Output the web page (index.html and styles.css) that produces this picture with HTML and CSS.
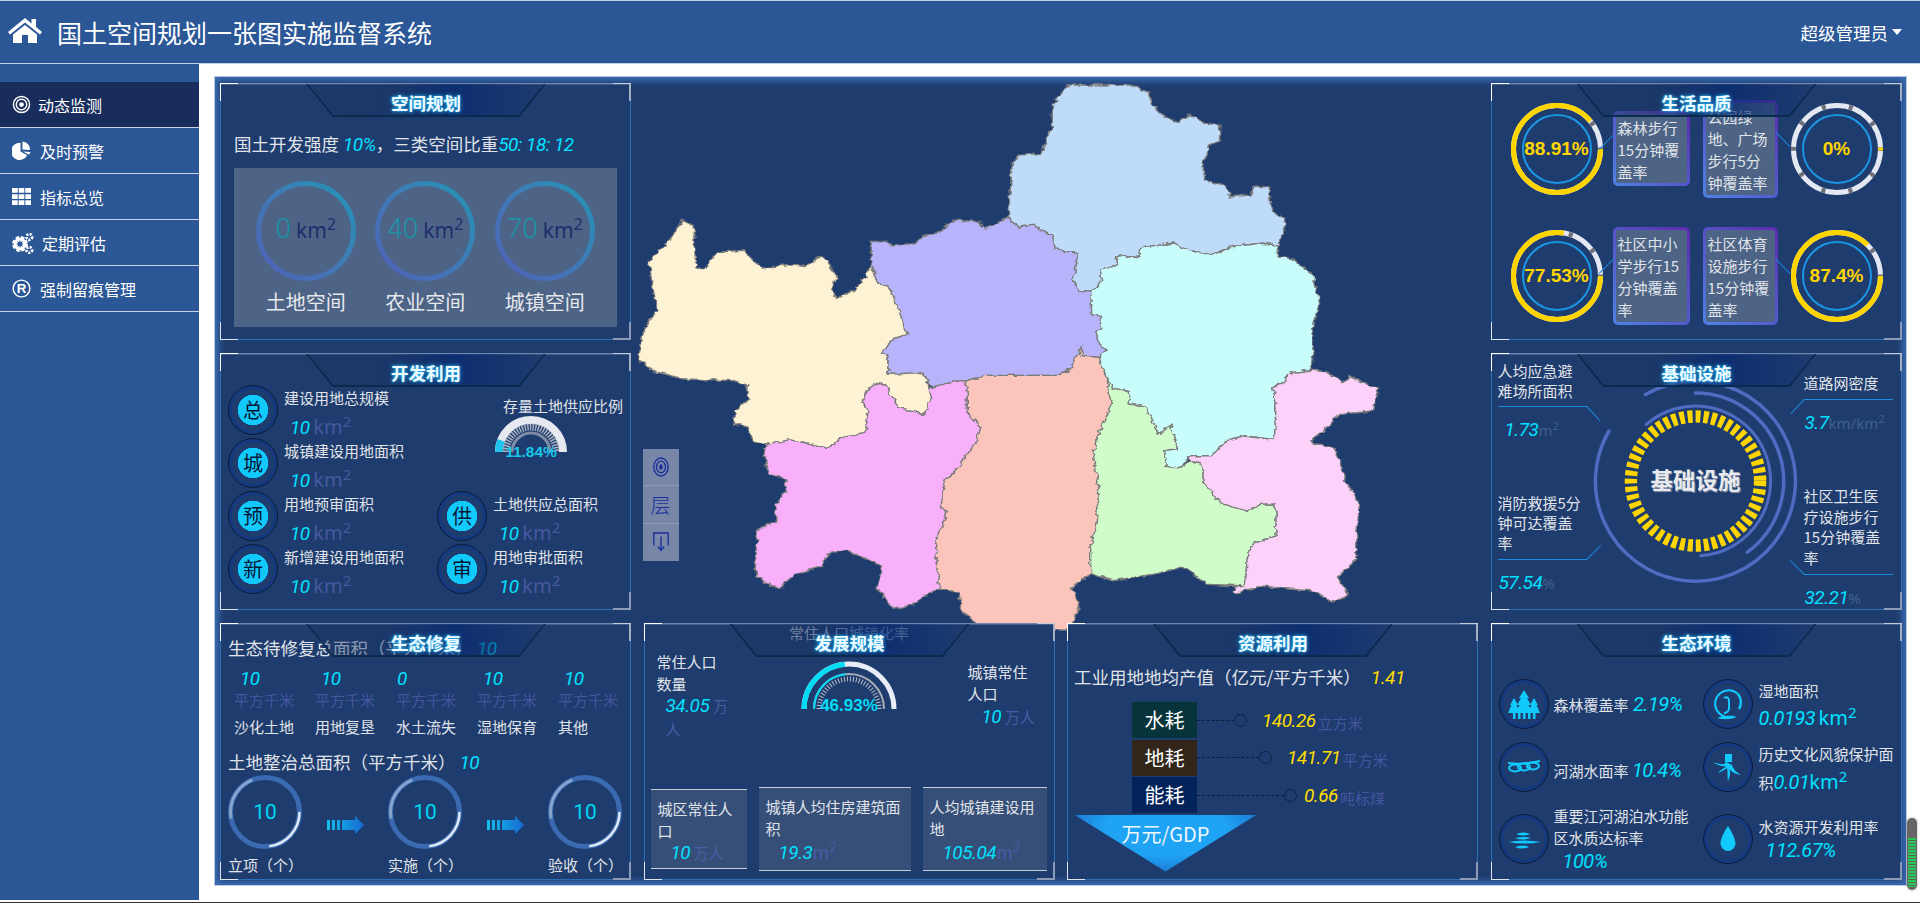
FILE: index.html
```html
<!DOCTYPE html>
<html lang="zh-CN">
<head>
<meta charset="utf-8">
<title>国土空间规划一张图实施监督系统</title>
<link rel="stylesheet" href="styles.css">
</head>
<body>
<header class="header">
  <svg class="home" viewBox="0 0 34 26"><path d="M17 1 0 15l2 2.500L17 5.500l15 12 2-2.500-6-5V2h-4.500v4.500z"/><path d="M5 17.500 17 8l12 9.500V26H20v-8h-6v8H5z"/></svg>
  <h1 class="app-title">国土空间规划一张图实施监督系统</h1>
  <div class="user">超级管理员<i class="caret"></i></div>
</header>
<div class="layout">
  <nav class="sidebar">
    <a class="nav active"><svg viewBox="0 0 20 20"><circle cx="10" cy="10" r="8.500" class="ol"/><circle cx="10" cy="10" r="5.500" class="ol"/><circle cx="10" cy="10" r="2.500"/></svg><span>动态监测</span></a>
    <a class="nav"><svg viewBox="0 0 20 20"><path d="M9 2v9l7 4A9 9 0 1 1 9 2z"/><path d="M11 .5a8.500 8.500 0 0 1 8 9l-8-.5zM11.500 11l8 .5-1.500 3z"/></svg><span>及时预警</span></a>
    <a class="nav"><svg viewBox="0 0 20 20"><path d="M0 1h6v5H0zM7 1h6v5H7zM14 1h6v5h-6zM0 7.500h6v5H0zM7 7.500h6v5H7zM14 7.500h6v5h-6zM0 14h6v5H0zM7 14h6v5H7zM14 14h6v5h-6z"/></svg><span>指标总览</span></a>
    <a class="nav nav-wide"><svg viewBox="0 0 22 22"><circle cx="8" cy="12" r="5.200" class="gear"/><circle cx="8" cy="12" r="5" class="gear-in"/><circle cx="17.300" cy="5" r="2.800" class="gear-sm"/><circle cx="17.300" cy="18" r="2.800" class="gear-sm"/></svg><span>定期评估</span></a>
    <a class="nav"><svg viewBox="0 0 20 20"><circle cx="10" cy="10" r="8.800" class="ol"/><text x="10" y="15" text-anchor="middle" class="r">R</text></svg><span>强制留痕管理</span></a>
  </nav>
  <main class="workspace">
    <div class="screen">

      <section class="panel space">
        <h2 class="title"><span>空间规划</span></h2>
        <p class="lead">国土开发强度 <b class="num">10%</b>，三类空间比重<b class="num">50: 18: 12</b></p>
        <div class="space-box">
          <div class="space-col"><div class="ring-o"><span class="big">0</span><span class="km">km<sup>2</sup></span></div><div class="space-name">土地空间</div></div>
          <div class="space-col"><div class="ring-o"><span class="big">40</span><span class="km">km<sup>2</sup></span></div><div class="space-name">农业空间</div></div>
          <div class="space-col"><div class="ring-o"><span class="big">70</span><span class="km">km<sup>2</sup></span></div><div class="space-name">城镇空间</div></div>
        </div>
      </section>

      <div class="map-cell">
        <svg class="map" viewBox="0 0 1568 1568" preserveAspectRatio="none">
          <defs><filter id="rough" x="-5%" y="-5%" width="110%" height="110%"><feTurbulence type="fractalNoise" baseFrequency="0.07" numOctaves="2" seed="4"/><feDisplacementMap in="SourceGraphic" scale="13" xChannelSelector="R" yChannelSelector="G"/></filter></defs>
          <g filter="url(#rough)" class="regions">
          <polygon fill="#bfdbfa" points="798,42 912,42 945,62 950,95 965,120 1000,148 1020,125 1040,145 1075,155 1075,200 1055,210 1050,240 1042,265 1050,310 1085,322 1095,355 1130,350 1140,325 1165,328 1172,395 1195,420 1195,445 1182,490 1150,485 1100,495 1060,518 1020,505 990,485 935,495 925,525 885,520 890,545 858,560 860,590 840,622 820,620 808,585 818,515 775,500 770,465 735,435 705,440 690,410 697,260 715,235 750,235 770,160 770,100"/>
          <polygon fill="#b8b4fb" points="690,410 705,440 735,435 770,465 775,500 818,515 808,585 820,620 840,622 842,685 858,690 858,725 848,735 855,765 870,785 855,805 822,800 825,770 800,840 780,855 650,855 615,870 600,870 550,890 540,860 525,848 470,852 470,800 460,795 475,760 503,740 490,670 470,605 450,597 440,545 440,480 470,480 475,492 510,490 545,460 565,455 590,420 640,425 645,445 670,430"/>
          <polygon fill="#fdf2d3" points="95,420 115,435 120,550 135,560 160,510 205,505 240,555 285,545 320,550 350,520 380,580 365,610 378,640 415,610 440,550 450,597 470,605 490,670 503,740 475,760 460,795 470,800 470,852 525,848 540,860 550,920 535,965 490,945 465,880 450,875 430,900 425,930 435,965 428,1015 390,1025 360,1060 325,1045 290,1035 245,1050 225,1040 215,1000 190,990 190,955 215,925 215,885 190,870 100,865 60,850 40,840 15,810 25,730 50,670 40,600 35,535 70,480"/>
          <polygon fill="#f8b0fb" points="430,900 450,875 465,880 490,945 535,965 550,920 545,890 600,870 615,870 615,960 640,1000 632,1040 600,1110 575,1150 565,1220 578,1240 560,1310 558,1375 565,1450 540,1470 510,1500 480,1510 450,1450 460,1390 425,1365 395,1345 360,1355 350,1390 300,1410 275,1450 250,1440 228,1410 232,1290 268,1260 265,1220 285,1180 282,1145 250,1130 245,1050 290,1035 325,1045 360,1060 390,1025 428,1015 435,965 425,930"/>
          <polygon fill="#fcc5bc" points="615,870 650,855 780,855 800,840 825,770 822,800 855,805 870,865 878,940 850,1030 845,1080 855,1170 850,1270 840,1340 840,1410 805,1450 820,1500 800,1568 640,1568 605,1510 600,1465 565,1450 558,1375 560,1310 578,1240 565,1220 575,1150 600,1110 632,1040 640,1000 615,960"/>
          <polygon fill="#c8fdfc" points="840,622 860,590 858,560 890,545 885,520 925,525 935,495 990,485 1020,505 1060,518 1100,495 1150,485 1182,490 1182,520 1210,530 1245,575 1258,650 1245,710 1245,800 1240,840 1200,850 1195,870 1172,890 1178,930 1175,1035 1120,1025 1090,1035 1060,1080 1020,1080 1005,1115 975,1110 975,1065 998,1060 985,995 965,1020 940,945 910,935 910,900 880,890 870,865 855,805 870,785 855,765 848,735 858,725 858,690 842,685"/>
          <polygon fill="#d0fcc9" points="870,865 880,890 910,900 910,935 940,945 965,1020 985,995 998,1060 975,1065 975,1110 1005,1115 1020,1095 1045,1105 1045,1155 1080,1215 1125,1235 1150,1215 1178,1215 1178,1305 1135,1325 1125,1370 1122,1445 1050,1440 1010,1390 960,1410 880,1430 840,1410 840,1340 850,1270 855,1170 845,1080 850,1030 878,940"/>
          <polygon fill="#fcd2fa" points="1240,840 1270,845 1300,875 1310,855 1365,895 1355,955 1290,965 1265,1010 1240,1040 1285,1060 1295,1100 1305,1150 1330,1215 1325,1300 1325,1370 1290,1420 1310,1470 1280,1490 1250,1460 1150,1445 1105,1465 1100,1445 1122,1445 1125,1370 1135,1325 1178,1305 1178,1215 1150,1215 1125,1235 1080,1215 1045,1155 1045,1105 1020,1095 1020,1080 1060,1080 1090,1035 1120,1025 1175,1035 1178,930 1172,890 1195,870 1200,850"/>
          </g>
        </svg>
        <div class="map-tools">
          <div class="tool"><svg viewBox="0 0 20 26" class="tool-ic"><ellipse cx="10" cy="13" rx="8" ry="10"/><ellipse cx="10" cy="13" rx="5" ry="6.500"/><ellipse cx="10" cy="13" rx="2" ry="3" class="dot"/></svg></div>
          <div class="tool">层</div>
          <div class="tool"><svg viewBox="0 0 20 26" class="tool-ic"><path d="M2 17V3h16v14"/><path d="M10 7v15M6.500 18l3.500 4 3.500-4"/></svg></div>
        </div>
      </div>

      <section class="panel quality">
        <h2 class="title"><span>生活品质</span></h2>
        <div class="quality-grid">
          <div class="q-ring"><svg viewBox="0 0 92 92"><circle cx="46" cy="46" r="43.500" class="q-base"/><circle cx="46" cy="46" r="43.500" class="q-tick"/><circle cx="46" cy="46" r="43.500" class="q-val" pathLength="100" stroke-dasharray="88.91 100"/><circle cx="46" cy="46" r="34" class="q-in"/></svg><span>88.91%</span></div>
          <div class="q-box q-short link-l">森林步行<br>15分钟覆<br>盖率</div>
          <div class="q-box q-tall link-r">公园绿<br>地、广场<br>步行5分<br>钟覆盖率</div>
          <div class="q-ring"><svg viewBox="0 0 92 92"><circle cx="46" cy="46" r="43.500" class="q-base"/><circle cx="46" cy="46" r="43.500" class="q-tick"/><circle cx="46" cy="46" r="43.500" class="q-val" pathLength="100" stroke-dasharray="1 99" stroke-dashoffset="0.500"/><circle cx="46" cy="46" r="34" class="q-in"/></svg><span>0%</span></div>
          <div class="q-ring"><svg viewBox="0 0 92 92"><circle cx="46" cy="46" r="43.500" class="q-base"/><circle cx="46" cy="46" r="43.500" class="q-tick"/><circle cx="46" cy="46" r="43.500" class="q-val" pathLength="100" stroke-dasharray="77.53 100"/><circle cx="46" cy="46" r="34" class="q-in"/></svg><span>77.53%</span></div>
          <div class="q-box q-full link-l">社区中小<br>学步行15<br>分钟覆盖<br>率</div>
          <div class="q-box q-full link-r">社区体育<br>设施步行<br>15分钟覆<br>盖率</div>
          <div class="q-ring"><svg viewBox="0 0 92 92"><circle cx="46" cy="46" r="43.500" class="q-base"/><circle cx="46" cy="46" r="43.500" class="q-tick"/><circle cx="46" cy="46" r="43.500" class="q-val" pathLength="100" stroke-dasharray="87.4 100"/><circle cx="46" cy="46" r="34" class="q-in"/></svg><span>87.4%</span></div>
        </div>
      </section>

      <section class="panel develop">
        <h2 class="title"><span>开发利用</span></h2>
        <div class="dev-grid">
          <div class="dev-item"><div class="badge solid">总</div><div><div class="dev-name">建设用地总规模</div><div class="dev-val"><b class="num">10</b> <span class="km-u">km<sup>2</sup></span></div></div></div>
          <div class="dev-gauge">
            <div class="dev-gauge-label">存量土地供应比例</div>
            <svg viewBox="0 0 80 40" class="gauge-a">
              <path d="M8 38a32 32 0 0 1 64 0" class="ga-band"/>
              <path d="M8 38a32 32 0 0 1 64 0" class="ga-cyan" pathLength="100" stroke-dasharray="11.84 100"/>
              <path d="M15 38a25 25 0 0 1 50 0" class="ga-tick"/>
              <path d="M21 38a19 19 0 0 1 38 0" class="ga-inner"/>
              <text x="40" y="43" text-anchor="middle" class="ga-text">11.84%</text>
            </svg>
          </div>
          <div class="dev-item"><div class="badge solid">城</div><div><div class="dev-name">城镇建设用地面积</div><div class="dev-val"><b class="num">10</b> <span class="km-u">km<sup>2</sup></span></div></div></div>
          <div class="dev-item"><div class="badge solid">预</div><div><div class="dev-name">用地预审面积</div><div class="dev-val"><b class="num">10</b> <span class="km-u">km<sup>2</sup></span></div></div></div>
          <div class="dev-item"><div class="badge solid">供</div><div><div class="dev-name">土地供应总面积</div><div class="dev-val"><b class="num">10</b> <span class="km-u">km<sup>2</sup></span></div></div></div>
          <div class="dev-item"><div class="badge solid">新</div><div><div class="dev-name">新增建设用地面积</div><div class="dev-val"><b class="num">10</b> <span class="km-u">km<sup>2</sup></span></div></div></div>
          <div class="dev-item"><div class="badge solid">审</div><div><div class="dev-name">用地审批面积</div><div class="dev-val"><b class="num">10</b> <span class="km-u">km<sup>2</sup></span></div></div></div>
        </div>
      </section>

      <section class="panel infra">
        <h2 class="title"><span>基础设施</span></h2>
        <div class="infra-col left">
          <div class="infra-block b1"><div class="cap diag-ur">人均应急避难场所面积</div><div class="infra-val"><b class="num">1.73</b><span class="u2">m<sup>2</sup></span></div></div>
          <div class="infra-block b2"><div class="cap diag-dr">消防救援5分钟可达覆盖率</div><div class="infra-val flush"><b class="num">57.54</b><span class="u2">%</span></div></div>
        </div>
        <svg class="infra-rings" viewBox="0 0 217 257">
          <path d="M58.500 41.500A100 100 0 1 1 21.900 78" class="arc"/>
          <path d="M108.500 40A88 88 0 0 1 160.200 199.300" class="arc"/>
          <path d="M59.200 71.500A75 75 0 1 1 113.500 202.800" class="arc thin"/>
          <circle cx="108.500" cy="128" r="64.600" class="ticks"/>
          <text x="108.500" y="136" text-anchor="middle" class="infra-label">基础设施</text>
        </svg>
        <div class="infra-col right">
          <div class="infra-block b3"><div class="cap diag-ul">道路网密度</div><div class="infra-val flush"><b class="num">3.7</b><span class="u2">km/km<sup>2</sup></span></div></div>
          <div class="infra-block b4"><div class="cap diag-dl">社区卫生医疗设施步行15分钟覆盖率</div><div class="infra-val flush"><b class="num">32.21</b><span class="u2">%</span></div></div>
        </div>
      </section>

      <section class="panel eco">
        <h2 class="title"><span>生态修复</span></h2>
        <p class="lead eco-lead">生态待修复总面积（平方千米）<b class="num eco-total">10</b></p>
        <div class="eco-cols">
          <div><div class="eco-num"><b class="num">10</b></div><div class="unit">平方千米</div><div class="eco-name">沙化土地</div></div>
          <div><div class="eco-num"><b class="num">10</b></div><div class="unit">平方千米</div><div class="eco-name">用地复垦</div></div>
          <div><div class="eco-num flush"><b class="num">0</b></div><div class="unit">平方千米</div><div class="eco-name">水土流失</div></div>
          <div><div class="eco-num"><b class="num">10</b></div><div class="unit">平方千米</div><div class="eco-name">湿地保育</div></div>
          <div><div class="eco-num"><b class="num">10</b></div><div class="unit">平方千米</div><div class="eco-name">其他</div></div>
        </div>
        <p class="lead eco-lead2">土地整治总面积（平方千米）<b class="num eco-total2">10</b></p>
        <div class="stages">
          <div class="stage"><svg viewBox="0 0 74 74" class="stage-ring"><circle cx="37" cy="37" r="34.500" class="sr-glow"/><circle cx="37" cy="37" r="34.500" class="sr-white" pathLength="100" stroke-dasharray="23 77"/><circle cx="37" cy="37" r="34.500" class="sr-white2" pathLength="100" stroke-dasharray="22 78" stroke-dashoffset="-47"/><text x="37" y="44" text-anchor="middle">10</text></svg><div class="stage-name">立项（个）</div></div>
          <svg class="flow-arrow" viewBox="0 0 37 18"><defs><linearGradient id="fa"><stop offset="0" stop-color="#14c0ee"/><stop offset="1" stop-color="#1468d0"/></linearGradient></defs><path fill="url(#fa)" d="M0 4h3v10H0zM5 4h3v10H5zM10 4h3v10h-3zM15 4h13V0l9 9-9 9v-4H15z"/></svg>
          <div class="stage"><svg viewBox="0 0 74 74" class="stage-ring"><circle cx="37" cy="37" r="34.500" class="sr-glow"/><circle cx="37" cy="37" r="34.500" class="sr-white" pathLength="100" stroke-dasharray="23 77"/><circle cx="37" cy="37" r="34.500" class="sr-white2" pathLength="100" stroke-dasharray="22 78" stroke-dashoffset="-47"/><text x="37" y="44" text-anchor="middle">10</text></svg><div class="stage-name">实施（个）</div></div>
          <svg class="flow-arrow" viewBox="0 0 37 18"><path fill="url(#fa)" d="M0 4h3v10H0zM5 4h3v10H5zM10 4h3v10h-3zM15 4h13V0l9 9-9 9v-4H15z"/></svg>
          <div class="stage"><svg viewBox="0 0 74 74" class="stage-ring"><circle cx="37" cy="37" r="34.500" class="sr-glow"/><circle cx="37" cy="37" r="34.500" class="sr-white" pathLength="100" stroke-dasharray="23 77"/><circle cx="37" cy="37" r="34.500" class="sr-white2" pathLength="100" stroke-dasharray="22 78" stroke-dashoffset="-47"/><text x="37" y="44" text-anchor="middle">10</text></svg><div class="stage-name">验收（个）</div></div>
        </div>
      </section>

      <section class="panel scale">
        <h2 class="title"><span>发展规模</span></h2>
        <div class="ghost">常住人口城镇化率</div>
        <div class="pop-top">
          <div class="pop-left"><div class="pop-name">常住人口数量</div><div class="pop-val"><b class="num">34.05</b> <span class="unit-i">万人</span></div></div>
          <svg class="gauge-b" viewBox="0 0 100 52">
            <path d="M5 49a45 45 0 0 1 90 0" class="gb-white"/>
            <path d="M5 49a45 45 0 0 1 90 0" class="gb-cyan" pathLength="100" stroke-dasharray="46.93 100"/>
            <path d="M15 49a35 35 0 0 1 70 0" class="gb-line"/>
            <path d="M15 49a35 35 0 0 1 70 0" class="gb-linec" pathLength="100" stroke-dasharray="46.93 100"/>
            <path d="M20 49a30 30 0 0 1 60 0" class="gb-tick"/>
            <text x="50" y="51" text-anchor="middle" class="gb-text">46.93%</text>
          </svg>
          <div class="pop-right"><div class="pop-name">城镇常住人口</div><div class="pop-val2"><b class="num">10</b> <span class="unit-i">万人</span></div></div>
        </div>
        <div class="cards">
          <div class="card c1"><div>城区常住人口</div><div class="card-val"><b class="num">10</b> <span class="unit-i">万人</span></div></div>
          <div class="card c2"><div>城镇人均住房建筑面积</div><div class="card-val"><b class="num">19.3</b><span class="unit-i unit-m">m<sup>2</sup></span></div></div>
          <div class="card c3"><div>人均城镇建设用地</div><div class="card-val"><b class="num">105.04</b><span class="unit-i unit-m">m<sup>2</sup></span></div></div>
        </div>
      </section>

      <section class="panel resource">
        <h2 class="title"><span>资源利用</span></h2>
        <p class="lead res-lead">工业用地地均产值（亿元/平方千米）<b class="num yellow res-total">1.41</b></p>
        <div class="res-rows">
          <div class="res-row r1"><div class="res-tag t1">水耗</div><i class="leader"></i><i class="node"></i><b class="num yellow">140.26</b><span class="unit-r">立方米</span></div>
          <div class="res-row r2"><div class="res-tag t2">地耗</div><i class="leader"></i><i class="node"></i><b class="num yellow">141.71</b><span class="unit-r">平方米</span></div>
          <div class="res-row r3"><div class="res-tag t3">能耗</div><i class="leader"></i><i class="node"></i><b class="num yellow">0.66</b><span class="unit-r">吨标煤</span></div>
        </div>
        <div class="funnel">万元/GDP</div>
      </section>

      <section class="panel env">
        <h2 class="title"><span>生态环境</span></h2>
        <div class="env-grid">
          <div class="env-item"><div class="badge"><svg viewBox="0 0 34 34" class="eco-ic"><path d="M17 3l5 8h-2l4 7h-2.500l4.500 8H8l4.500-8H10l4-7h-2zM7 11l4 7H9.500l3.500 8H1l3.500-8H3zM27 11l4 7h-1.500l3.500 8H21l3.500-8H23z"/><path d="M6 26h2.500v6H6zM11 26h2.500v6H11zM16 26h2.500v6H16zM21 26h2.500v6H21zM26 26h2.500v6H26z"/></svg></div><div class="env-text">森林覆盖率<b class="num"> 2.19%</b></div></div>
          <div class="env-item"><div class="badge"><svg viewBox="0 0 34 34" class="eco-ic"><path d="M27 7A13.500 13.500 0 1 0 22 29.500" class="ic-s"/><path d="M27 7a13.500 13.500 0 0 1 1 15" class="ic-s2"/><path d="M13 11c3-2 5 0 5 3v8c-1 3-3 4-5 4" class="ic-s3"/><path d="M6 31q10-4 20-1-10 4-20 1z"/></svg></div><div class="env-text tall">湿地面积<br><b class="num">0.0193</b> <span class="km-c">km<sup>2</sup></span></div></div>
          <div class="env-item"><div class="badge"><svg viewBox="0 0 34 34" class="eco-ic"><ellipse cx="8" cy="18" rx="6" ry="3.500" class="ic-s3"/><ellipse cx="17" cy="17" rx="6" ry="3.500" class="ic-s3"/><ellipse cx="26" cy="16" rx="6" ry="3.500" class="ic-s3"/><path d="M1 13q16 2 32-2" class="ic-s3"/></svg></div><div class="env-text low">河湖水面率 <b class="num">10.4%</b></div></div>
          <div class="env-item"><div class="badge"><svg viewBox="0 0 34 34" class="eco-ic"><path d="M14 4h7v8h-7z"/><path d="M15 12C13 16 8 14 1 12c6 3 10 5 14 4-2 3-5 3-8 7 4-2 7-3 9-5 1 4 0 8 1 13 2-5 3-8 1-12 3 3 6 5 12 6-5-3-8-6-9-10z"/></svg></div><div class="env-text tall2">历史文化风貌保护面积<b class="num">0.01</b><span class="km-c">km<sup>2</sup></span></div></div>
          <div class="env-item"><div class="badge"><svg viewBox="0 0 34 34" class="eco-ic"><path d="M9 12q8-3 14 0-6 3-14 0zM8 16q10-2 16 0-8 3-16 0zM1 20q16-3 33 0-16 3-33 0zM8 25q8-3 14 0-7 3-14 0z"/></svg></div><div class="env-text para">重要江河湖泊水功能区水质达标率<div class="in20"><b class="num">100%</b></div></div></div>
          <div class="env-item"><div class="badge"><svg viewBox="0 0 34 34" class="eco-ic"><path d="M17 4C17 4 9.500 15 9.500 21.500a7.500 7.500 0 0 0 15 0C24.500 15 17 4 17 4z"/></svg></div><div class="env-text para">水资源开发利用率<div class="in7"><b class="num">112.67%</b></div></div></div>
        </div>
      </section>

    </div>
  </main>
</div>
<div class="page-end"></div>
<div class="scroll-widget"></div>
</body>
</html>
```
FILE: styles.css
```css
*{box-sizing:border-box}
html,body{margin:0;padding:0;height:903px;overflow:hidden;background:#fff}
body{font-family:"Noto Sans CJK SC","Liberation Sans",sans-serif;display:flex;flex-direction:column;position:relative;color:#e0e4ea}
h1,h2,p{margin:0;font-weight:normal}
sup{font-size:.75em;line-height:0;vertical-align:.5em}

.header{height:64px;flex:none;display:flex;align-items:center;background:#2b5797;border-top:1px solid #c5d0e2;border-bottom:1px solid #c5d0e2;padding:0 18px 0 8px;color:#fff}
.home{width:34px;height:26px;fill:#fff;margin:-4px 15px 0 0}
.app-title{font-size:25px;line-height:30px;flex:1;white-space:nowrap}
.user{font-size:17.500px;display:flex;align-items:center}
.caret{margin-left:4px;border:5.500px solid transparent;border-top:6px solid #fff;border-bottom:0}

.layout{flex:1;display:flex;min-height:0}
.sidebar{width:199px;height:836px;flex:none;background:#2b5797;padding-top:18px}
.nav{height:46px;display:flex;align-items:center;padding-left:12px;gap:7px;border-bottom:1px solid #c9d3e3;font-size:16px;color:#fff;line-height:20px}
.nav:nth-child(2),.nav:nth-child(3),.nav:nth-child(5){gap:9px}
.nav svg{width:19px;height:19px;fill:#fff;flex:none}
.nav.nav-wide{gap:8px}
.nav.nav-wide svg{width:22px;height:22px}
.nav .ol{fill:none;stroke:#fff;stroke-width:1.500}
.nav .r{font:bold 14px "Liberation Sans",sans-serif;fill:#fff}
.nav .gear{fill:none;stroke:#fff;stroke-width:5.500;stroke-dasharray:2.700 1.400}
.nav .gear-in{fill:none;stroke:#fff;stroke-width:3}
.nav .gear-sm{fill:none;stroke:#fff;stroke-width:2.800;stroke-dasharray:2 1.300}
.active{background:#182d5b}
.page-end{height:1px;flex:none;background:#333}

.workspace{flex:1;padding:12px 13px 0 15px;min-width:0}
.screen{width:1693px;height:810px;background:#1f3c6e;border:1px solid #bcc8dc;box-shadow:inset 0 0 6px 4px #3b6db4;padding:6px 5px;display:grid;grid-template-columns:repeat(4,411px);grid-template-rows:repeat(3,257px);gap:13px 12.500px;position:relative}

.panel{position:relative;z-index:1;background-color:#1f3c6e;
 background-image:
  linear-gradient(#fff,#fff),linear-gradient(#fff,#fff),
  linear-gradient(#c3ccd9,#c3ccd9),linear-gradient(#a3b0c6,#a3b0c6),
  linear-gradient(#dfe5ee,#dfe5ee),linear-gradient(#dfe5ee,#dfe5ee),
  linear-gradient(#8c9cb8,#8c9cb8),linear-gradient(#8c9cb8,#8c9cb8),
  linear-gradient(#6d86ad,#6d86ad),linear-gradient(#2d70b8,#2d70b8),
  linear-gradient(#2d70b8,#2d70b8),linear-gradient(#2d70b8,#2d70b8);
 background-size:18px 1px,1px 18px,18px 1px,2px 18px,18px 1px,1px 18px,18px 2px,2px 18px,100% 1.500px,100% 1px,1px 100%,1px 100%;
 background-position:0 0,0 0,100% 0,100% 0,0 100%,0 100%,100% 100%,100% 100%,0 0,0 100%,0 0,100% 0;
 background-repeat:no-repeat}
.space{grid-column:1;grid-row:1}
.map-cell{grid-column:2/4;grid-row:1/3;position:relative}
.quality{grid-column:4;grid-row:1}
.develop{grid-column:1;grid-row:2}
.infra{grid-column:4;grid-row:2}
.eco{grid-column:1;grid-row:3}
.scale{grid-column:2;grid-row:3}
.resource{grid-column:3;grid-row:3}
.env{grid-column:4;grid-row:3}

.title{position:absolute;z-index:3;left:86px;top:1px;width:240px;height:33px;background:linear-gradient(90deg,rgba(25,50,95,.4),rgba(22,50,100,.45) 35%,rgba(6,40,112,.72) 62%,rgba(30,60,112,.35));clip-path:polygon(0 0,100% 0,89% 100%,11% 100%)}
.title::after{content:"";position:absolute;inset:0;background:#0a2a4e;clip-path:polygon(0 0,2px 0,calc(11% + 1px) calc(100% - 2px),calc(89% - 1px) calc(100% - 2px),calc(100% - 2px) 0,100% 0,89% 100%,11% 100%)}
.title span{position:relative;z-index:1;display:block;text-align:center;font-size:17.500px;font-weight:700;line-height:37px;color:#eefaff;text-shadow:0 0 4px #27b8f5,0 0 2px #27b8f5}

.num{font:italic 400 19px "Roboto",sans-serif;color:#00e1ff;letter-spacing:-.5px}
.yellow{color:#ffdd00}
.lead{font-size:17.500px;line-height:24px;white-space:nowrap}

/* space */
.space{padding:49px 14px 0}
.space-box{margin-top:12px;height:159px;background:#4d6486;display:grid;grid-template-columns:repeat(3,119.500px);padding:13px 0 0 12px}
.space-col{display:flex;flex-direction:column;align-items:center}
.ring-o{width:100px;height:100px;border-radius:50%;border:5px solid transparent;background:linear-gradient(#4d6486,#4d6486) padding-box,linear-gradient(45deg,#4f5fb8,#3f7cb5 55%,#1f97b8) border-box;display:flex;align-items:baseline;justify-content:center;padding-top:25px;gap:5px}
.big{font:300 28px/36px "Roboto",sans-serif;color:#1b93a6}
.km{font:400 21px/36px "Noto Sans",sans-serif;color:#1c2f6b}
.space-name{font-size:20px;line-height:26px;margin-top:8px;color:#e6e8ec;white-space:nowrap}

/* map */
.map{position:absolute;left:-14px;top:-13px;width:860px;height:560px;overflow:visible}
.regions polygon{stroke:#7d7d7d;stroke-width:1.400px;vector-effect:non-scaling-stroke}
.map-tools{position:absolute;left:-1px;top:366px;width:36px;height:112px;background:#7887a8;display:grid;grid-template-rows:repeat(3,1fr);z-index:0}
.tool{border-bottom:1px solid #8e9bb7;display:flex;align-items:center;justify-content:center;color:#1b2f9c;font-size:20px;font-weight:300}
.tool:last-child{border-bottom:0}
.tool-ic{width:18px;height:24px;fill:none;stroke:#1b2f9c;stroke-width:1.500}
.tool-ic .dot{fill:#1b2f9c;stroke:none}

/* quality */
.quality-grid{display:grid;grid-template-columns:102px 90px 88px 92px;grid-template-rows:127px 127px;padding:2px 0 0 20px;align-items:center}
.q-ring{width:92px;height:92px;position:relative;display:flex;align-items:center;justify-content:center}
.q-ring svg{position:absolute;inset:0}
.q-ring span{position:relative;font:700 19px "Liberation Sans",sans-serif;color:#ffd500}
.q-base,.q-tick,.q-val,.q-in{fill:none}
.q-base{stroke:#e4e8f3;stroke-width:5}
.q-tick{stroke:#6e7079;stroke-width:5;stroke-dasharray:4 23.330;stroke-dashoffset:2}
.q-val{stroke:#ffd500;stroke-width:5}
.q-in{stroke:#1a96e2;stroke-width:2}
.q-box{position:relative;width:77px;border:3px solid transparent;border-radius:5px;background:linear-gradient(#4d6486,#4d6486) padding-box,linear-gradient(45deg,#4f82e4,#5c2bb0) border-box;font-size:15px;line-height:22px;padding:3px 0 0 2px;white-space:nowrap}
.q-short{height:75px}
.q-tall{height:98px;width:75px}
.q-full{height:98px}
.q-full.link-r{width:75px}
.link-l::after,.link-r::after{content:"";position:absolute;height:1px;width:20px;background:#1a86d8}
.link-l::after{left:-20px;top:28px;transform:rotate(-45deg)}
.link-r::after{right:-18px;top:36px;transform:rotate(45deg)}
.q-short.link-l::after{top:28px}
.q-full.link-l::after{top:36px}

/* shared badge */
.badge{width:50px;height:50px;flex:none;border-radius:50%;border:1px solid #0b1a3c;box-shadow:inset 0 0 0 1px #1c3b70,inset 0 0 0 2.500px #10398a;display:flex;align-items:center;justify-content:center}
.solid{background:radial-gradient(circle,#12c9fc 15px,transparent 15.500px);font-size:20px;color:#031634}

/* develop */
.dev-grid{display:grid;grid-template-columns:209px 190px;grid-auto-rows:53px;padding:31.500px 0 0 8px}
.dev-item{display:flex;gap:6px;align-items:flex-start}
.dev-name{font-size:15px;line-height:25px;white-space:nowrap}
.dev-val{line-height:30px;margin-top:2px;padding-left:6px;white-space:nowrap}
.km-u{font:400 20px "Noto Sans",sans-serif;color:#46579f}
.dev-gauge{grid-row:span 2;padding:11px 0 0 66px;display:flex;flex-direction:column}
.dev-gauge-label{font-size:15px;line-height:20px;white-space:nowrap}
.gauge-a{width:80px;height:40px;margin:-2px 0 0 -12px;overflow:visible;fill:none}
.ga-band{stroke:#e6e9ef;stroke-width:8}
.ga-cyan{stroke:#1cc4ee;stroke-width:8}
.ga-tick{stroke:#aab2c0;stroke-width:7;stroke-dasharray:1.500 1.200}
.ga-inner{stroke:#7f8ca6;stroke-width:3}
.ga-text{font:700 15.500px "Liberation Sans",sans-serif;fill:#18c7ec}

/* infra */
.infra{display:grid;grid-template-columns:89px 217px 89px;padding-left:7px}
.infra-col{min-width:0}
.cap{font-size:15px;line-height:19.500px;border-bottom:1px solid #1a8fe0;position:relative;padding-bottom:6px}
.cap::after{content:"";position:absolute;width:20px;height:1px;background:#1a8fe0}
.diag-ur::after{left:100%;transform:rotate(47deg);transform-origin:0 0;bottom:-1px}
.diag-dr::after{left:100%;bottom:-1px;transform:rotate(-45deg);transform-origin:0 100%}
.diag-ul::after{right:100%;bottom:-1px;transform:rotate(-47deg);transform-origin:100% 0}
.diag-dl::after{right:100%;bottom:-1px;transform:rotate(45deg);transform-origin:100% 100%}
.infra-val{line-height:30px;padding:7px 0 0 7px;white-space:nowrap}
.infra-val.flush{padding-left:1px}
.u2{font:400 15px "Noto Sans",sans-serif;color:#3f6189}
.b1{margin-top:8px}
.b2{margin-top:49px}
.b2 .cap{line-height:20px}
.b3{margin-top:20px}
.b3 .cap{line-height:20px}
.b4{margin-top:49px}
.b4 .cap{line-height:20.500px}
.infra-rings{width:217px;height:257px;overflow:visible;fill:none}
.arc{stroke:#4f6bc2;stroke-width:3.500;stroke-linecap:round}
.arc.thin{stroke-width:3}
.ticks{stroke:#ffd500;stroke-width:12.400;stroke-dasharray:5 3}
.infra-label{font:700 22.500px "Noto Sans CJK SC",sans-serif;fill:#e8eaee;text-shadow:1px 1px 1px #8a93a6}

/* eco */
.eco{padding:13px 8px 0}
.eco-total{margin-left:4px}
.eco-cols{display:grid;grid-template-columns:repeat(5,81px);margin:6px 0 0 6px}
.eco-num{line-height:24px;padding-left:6px}
.eco-num.flush{padding-left:1px}
.unit{font-size:15px;line-height:20px;color:#44559f;white-space:nowrap}
.eco-name{font-size:15px;line-height:20px;margin-top:7px;white-space:nowrap}
.eco-lead2{margin-top:13px}
.eco-total2{margin-left:4px}
.stages{display:flex;gap:24.500px;margin-top:.500px}
.stage{width:74px;flex:none}
.stage-ring{width:74px;height:74px;display:block;fill:none;overflow:visible}
.stage-ring text{font:400 21px "Roboto",sans-serif;fill:#00d7f2}
.sr-glow{stroke:#3a6bb2;stroke-width:5;filter:blur(.7px)}
.sr-white{stroke:#dfe8f5;stroke-width:2.500;filter:blur(.4px)}
.sr-white2{stroke:#86a4cc;stroke-width:3;filter:blur(.5px)}
.stage-name{font-size:15px;line-height:20px;margin-top:6px;white-space:nowrap}
.flow-arrow{width:37px;height:18px;flex:none;margin-top:41px}

/* scale */
.ghost{height:20px;line-height:20px;font-size:15px;text-align:center;color:#b4bdcb}
.pop-top{height:144px;display:grid;grid-template-columns:155px 100px 1fr;position:relative}
.pop-left{padding:8px 0 0 13px}
.pop-name{font-size:15px;line-height:22px;width:65px}
.pop-val{width:76px;padding-left:9px;line-height:23px;margin-top:-1px}
.unit-i{font-size:15px;color:#4a5ba5}
.unit-m{font-size:18px}
.gauge-b{width:100px;height:52px;margin-top:17px;fill:none;overflow:visible}
.gb-white{stroke:#e8ecf6;stroke-width:5}
.gb-cyan{stroke:#00dcf5;stroke-width:5}
.gb-line{stroke:#a8adb8;stroke-width:2}
.gb-linec{stroke:#00dcf5;stroke-width:2}
.gb-tick{stroke:#b9bcc4;stroke-width:5;stroke-dasharray:1 2}
.gb-text{font:700 17px "Liberation Sans",sans-serif;fill:#00dcf5}
.pop-right{padding:18px 0 0 69px}
.pop-val2{padding-left:14px;line-height:23px;white-space:nowrap}
.cards{display:flex;align-items:center;gap:12px;padding-left:7px}
.card{background:#354f78;border-top:1px solid #c3cbd9;border-bottom:1px solid #c3cbd9;font-size:15px;line-height:21.500px;padding:8px 7px 0}
.c1{width:96px;height:80px}
.c2{width:152px;height:84px}
.c3{width:124px;height:84px}
.card-val{padding-left:13px;line-height:24px}

/* resource */
.resource{padding:42px 0 0 7px}
.res-total{margin-left:10px}
.res-rows{margin:13px 0 0 58px;display:flex;flex-direction:column;gap:1.500px}
.res-row{height:36px;display:flex;align-items:center;white-space:nowrap}
.res-tag{width:65px;height:36px;font-size:20px;line-height:36px;text-align:center;color:#fff;flex:none}
.t1{background:#06343a}
.t2{background:#32261b}
.t3{background:#02245a}
.leader{display:block;height:0;border-top:1px dashed #0b1d3e}
.node{width:13px;height:13px;border-radius:50%;border:1.500px solid #0c2242;flex:none}
.r1 .leader{width:37px}
.r2 .leader{width:62px}
.r3 .leader{width:87px}
.r1 .node,.r2 .node{margin-right:15px}
.r3 .node{margin-right:7px}
.unit-r{font-size:15px;color:#44559f;margin:4px 0 0 2px}
.funnel{width:183px;height:57px;margin-top:1.500px;padding-top:6px;text-align:center;font:400 20px/26px "Noto Sans CJK SC",sans-serif;color:#eef6ff;background:radial-gradient(ellipse 60% 85% at 50% 25%,#1fa3f4 55%,#1a6ec8 100%);clip-path:polygon(0 0,100% 0,50% 100%)}

/* env */
.env-grid{display:grid;grid-template-columns:204px 204px;grid-template-rows:63px 72px 50px;padding:56px 0 0 8px}
.env-item{display:flex;align-items:center;gap:5px;height:50px}
.env-text{font-size:15px;line-height:22px;width:145px;flex:none}
.env-item:nth-child(even) .env-text{margin-left:1px}
.env-text.low{margin-top:6px}
.env-text.tall{line-height:27px}
.env-text.tall2{line-height:29px;margin-top:1px}
.env-text .num{font-size:20px}
.km-c{font:400 20px "Noto Sans",sans-serif;color:#00e1ff}
.in20{padding-left:9px}
.in7{padding-left:7px}
.eco-ic{width:34px;height:34px;fill:#12c9fc}
.ic-s,.ic-s2,.ic-s3{fill:none;stroke:#12c9fc}
.ic-s{stroke-width:2}
.ic-s2{stroke-width:2.500}
.ic-s3{stroke-width:2}

.scroll-widget{position:absolute;left:1907px;top:818px;width:10px;height:72px;border-radius:5px;background:repeating-linear-gradient(#28c856 0 2px,#5c6b60 2px 3px) 1px 20px/8px 49px no-repeat,#666;box-shadow:0 0 3px rgba(0,0,0,.3);z-index:5}
```
